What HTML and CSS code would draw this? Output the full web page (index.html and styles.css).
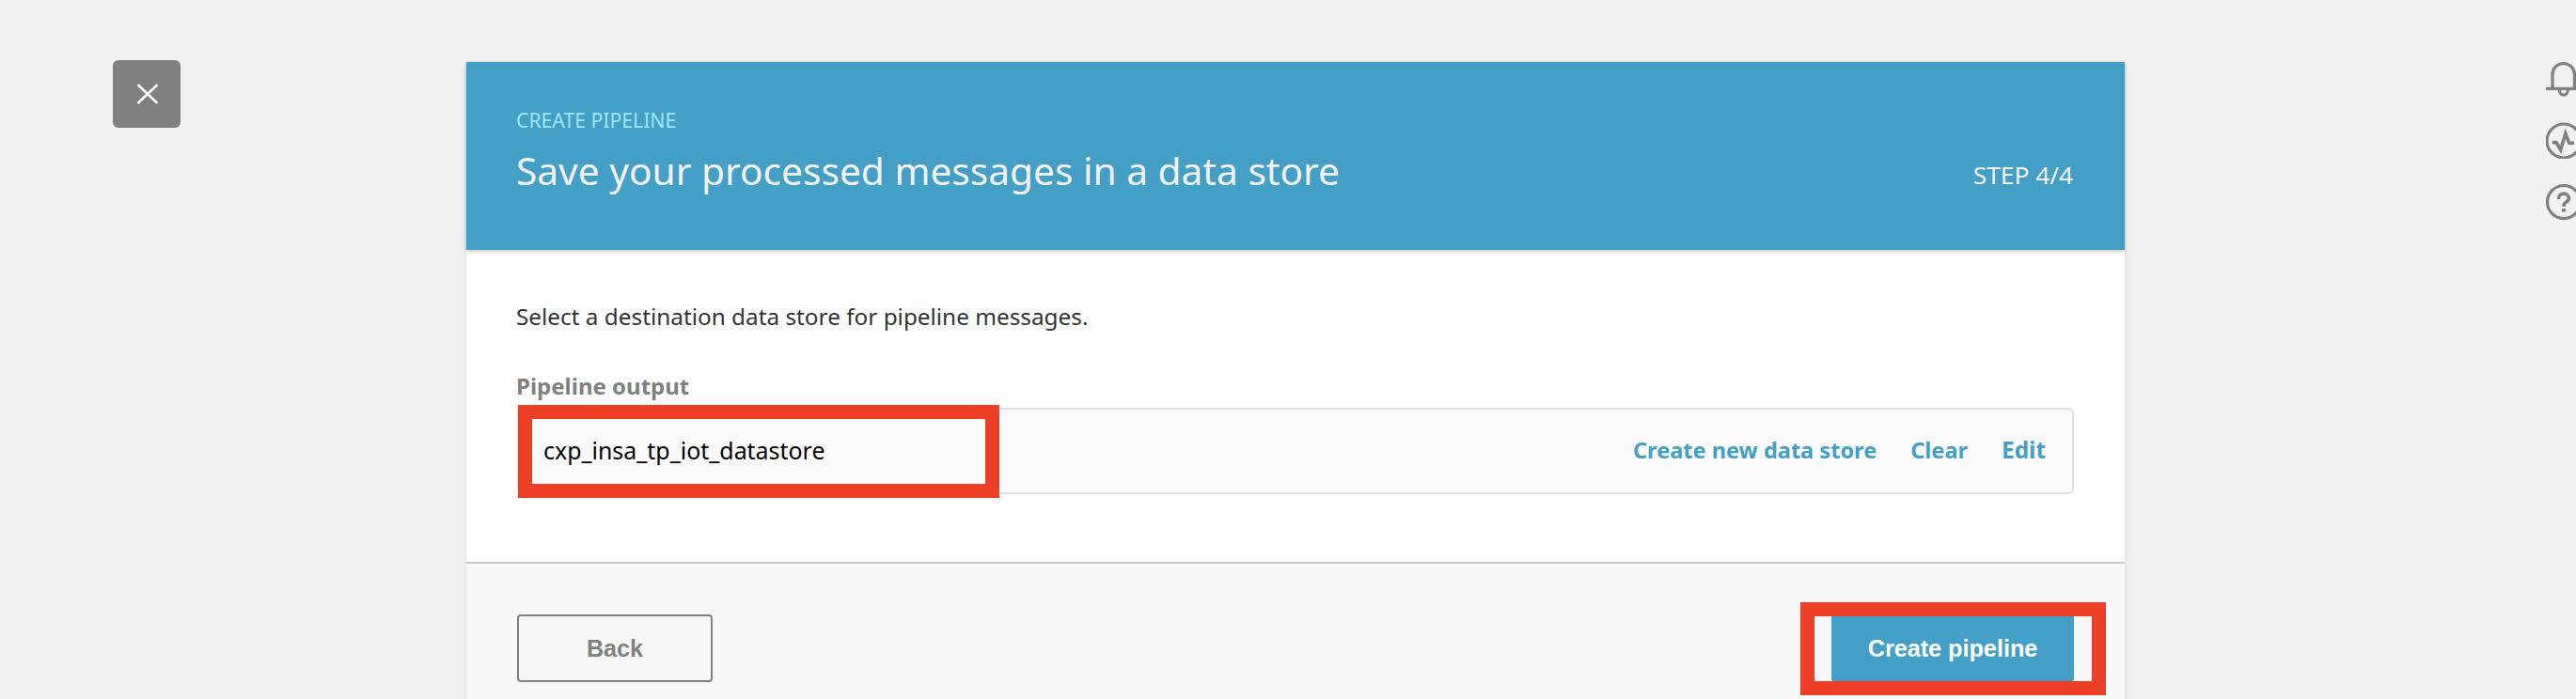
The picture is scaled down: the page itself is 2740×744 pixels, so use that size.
FILE: index.html
```html
<!DOCTYPE html>
<html lang="en">
<head>
<meta charset="utf-8">
<title>Create pipeline</title>
<link rel="stylesheet" href="styles.css">
</head>
<body>
<div class="page">
  <button class="close" aria-label="Close">
    <svg width="24" height="22" viewBox="0 0 24 22"><path d="M2.3 1.8 21.7 20.2M21.7 1.8 2.3 20.2"/></svg>
  </button>
  <main class="card">
    <header class="card-header">
      <div>
        <div class="eyebrow">CREATE PIPELINE</div>
        <h1 class="title">Save your processed messages in a data store</h1>
      </div>
      <div class="step">STEP 4/4</div>
    </header>
    <section class="card-body">
      <p class="intro">Select a destination data store for pipeline messages.</p>
      <div class="label">Pipeline output</div>
      <div class="output">
        <span class="output-name">cxp_insa_tp_iot_datastore</span>
        <nav class="links">
          <a>Create new data store</a>
          <a>Clear</a>
          <a class="edit">Edit</a>
        </nav>
        <div class="highlight highlight-output"></div>
      </div>
    </section>
    <footer class="card-footer">
      <button class="btn btn-back">Back</button>
      <div class="submit">
        <button class="btn btn-create">Create pipeline</button>
        <div class="highlight highlight-create"></div>
      </div>
    </footer>
  </main>
  <aside class="rail">
    <svg width="40" height="40" viewBox="0 0 40 40"><path d="M0 30.4H38M7 30V15.200a11.700 11.700 0 0 1 23.400 0V30M14.200 31.500a4.600 5.600 0 0 0 9.200 0"/></svg>
    <svg width="40" height="40" viewBox="0 0 40 40"><circle cx="19" cy="21" r="18"/><path class="pulse" d="M7 22.600h4l4.700 8L20.800 13l4 10.300H30"/></svg>
    <svg width="40" height="40" viewBox="0 0 40 40"><circle cx="19" cy="21" r="17.500"/><path class="question" d="M13.600 18v-1c0-3 2.500-4.900 5.400-4.900s5.400 2 5.400 5.200c0 4-5.200 3.900-5.200 6.700v2"/><path class="dot" d="M17 28h4v3.500h-4z"/></svg>
  </aside>
</div>
</body>
</html>
```
FILE: styles.css
```css
* { box-sizing: border-box; margin: 0; padding: 0; }
body { background: #f1f1f1; font-family: "Noto Sans", "Open Sans", sans-serif; overflow: hidden; }
.page { display: flex; align-items: flex-start; height: 744px; overflow: hidden; }

.close { flex: none; display: flex; align-items: center; justify-content: center; width: 72px; height: 72px; margin: 64px 0 0 120px; border: 0; border-radius: 6px; background: #808080; }
.close svg { fill: none; stroke: #fff; stroke-width: 2.6; stroke-linecap: round; margin-left: 2px; }

.card { flex: none; width: 1764px; margin: 66px 0 0 304px; background: #fff; box-shadow: 0 2px 6px rgba(0, 0, 0, .1); }
.card-header { position: relative; display: flex; justify-content: space-between; align-items: flex-end; height: 200px; padding: 0 55px 54px 53px; background: #449fc6; color: #f2f2f2; box-shadow: 0 2px 4px rgba(0, 0, 0, .2); }
.eyebrow { font-size: 21.2px; line-height: 30px; color: #a0e4fb; }
.title { margin-top: 9px; font-size: 40.65px; line-height: 60px; font-weight: 400; white-space: nowrap; }
.step { margin-bottom: 8px; font-size: 26.3px; line-height: 36px; }

.card-body { height: 332px; padding: 53px 54px 0 53px; }
.intro { font-size: 24.34px; line-height: 36px; color: #333; }
.label { margin-top: 38px; font-size: 24px; line-height: 36px; font-weight: 700; color: #808080; }
.output { position: relative; display: flex; justify-content: space-between; align-items: center; height: 92px; margin: 5px 0 0 1px; padding: 0 28px 3px 26px; border: 2px solid #e0e0e0; border-radius: 6px; background: #fafafa; }
.output-name { font-size: 24.93px; color: #000; }
.links { display: flex; align-items: baseline; gap: 36px; font-size: 23.55px; font-weight: 700; color: #449fc6; }
.edit { font-size: 24.4px; }

.card-footer { display: flex; justify-content: space-between; height: 220px; padding: 54px 54px 0; border-top: 2px solid #c8c8c8; background: #f7f7f7; }
.btn { height: 72px; font: 700 25.2px "Liberation Sans", Arial, sans-serif; border-radius: 4px; }
.btn-back { width: 208px; border: 2px solid #808080; background: transparent; color: #808080; }
.submit { position: relative; height: 72px; }
.btn-create { width: 258px; border: 0; background: #449fc6; color: #fff; }

.highlight { position: absolute; border: 15px solid #ec3f26; }
.highlight-output { left: -1px; top: -5px; width: 512px; height: 99px; }
.highlight-create { left: -33px; top: -13px; width: 325px; height: 99px; }

.rail { flex: none; display: flex; flex-direction: column; gap: 25px; width: 32px; margin: 64px 0 0 448px; overflow: hidden; }
.rail svg { display: block; flex: none; fill: none; stroke: #808080; stroke-width: 3.2; }
.rail .pulse { stroke-width: 3.6; }
.rail .question { stroke-width: 3.6; }
.rail .dot { fill: #808080; stroke: none; }
```
